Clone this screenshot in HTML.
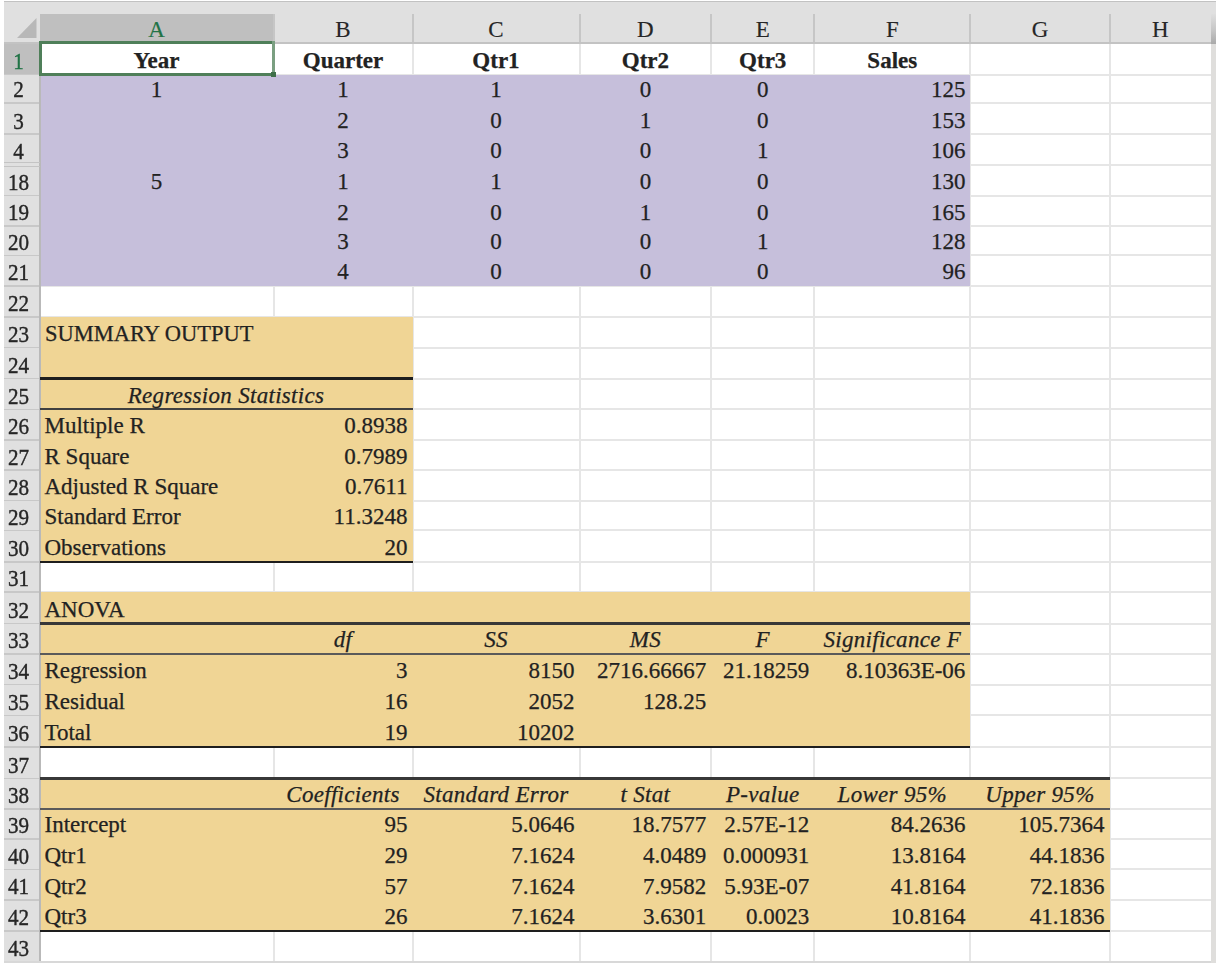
<!DOCTYPE html>
<html><head><meta charset="utf-8"><style>
html,body{margin:0;padding:0;background:#fff;}
body{width:1224px;height:966px;position:relative;overflow:hidden;}
div{position:absolute;}
.t{font-family:"Liberation Serif",serif;font-size:23px;line-height:normal;white-space:nowrap;color:#222;-webkit-text-stroke:0.25px #222;}
.h{font-family:"Liberation Serif",serif;font-size:23px;line-height:normal;white-space:nowrap;text-align:center;-webkit-text-stroke:0.15px currentColor;}
.rh{font-size:24px !important;transform:scaleX(0.88);-webkit-text-stroke:0.4px currentColor;}
#w{position:absolute;left:0;top:0;width:1224px;height:966px;filter:blur(0.6px);}
</style></head><body><div id="w">
<div style="left:4.0px;top:1.0px;width:1212.0px;height:42.5px;background:#e0e0e0"></div>
<div style="left:4.0px;top:0.8px;width:1212.0px;height:1.7px;background:#c2c2c2"></div>
<div style="left:39.5px;top:14.0px;width:234.0px;height:29.5px;background:#bfbfbf"></div>
<div style="left:4.0px;top:43.5px;width:35.5px;height:31.0px;background:#bfbfbf"></div>
<div style="left:4.0px;top:74.5px;width:35.5px;height:887.3px;background:#e0e0e0"></div>
<div style="left:39.5px;top:43.5px;width:1171.8px;height:918.3px;background:#fff"></div>
<div style="left:39.5px;top:73.5px;width:1171.8px;height:2.0px;background:#e6e6e6"></div>
<div style="left:39.5px;top:102.1px;width:1171.8px;height:2.0px;background:#e6e6e6"></div>
<div style="left:39.5px;top:133.2px;width:1171.8px;height:2.0px;background:#e6e6e6"></div>
<div style="left:39.5px;top:163.8px;width:1171.8px;height:2.0px;background:#e6e6e6"></div>
<div style="left:39.5px;top:194.7px;width:1171.8px;height:2.0px;background:#e6e6e6"></div>
<div style="left:39.5px;top:225.1px;width:1171.8px;height:2.0px;background:#e6e6e6"></div>
<div style="left:39.5px;top:254.3px;width:1171.8px;height:2.0px;background:#e6e6e6"></div>
<div style="left:39.5px;top:285.0px;width:1171.8px;height:2.0px;background:#e6e6e6"></div>
<div style="left:39.5px;top:315.8px;width:1171.8px;height:2.0px;background:#e6e6e6"></div>
<div style="left:39.5px;top:346.6px;width:1171.8px;height:2.0px;background:#e6e6e6"></div>
<div style="left:39.5px;top:377.5px;width:1171.8px;height:2.0px;background:#e6e6e6"></div>
<div style="left:39.5px;top:408.3px;width:1171.8px;height:2.0px;background:#e6e6e6"></div>
<div style="left:39.5px;top:438.8px;width:1171.8px;height:2.0px;background:#e6e6e6"></div>
<div style="left:39.5px;top:469.2px;width:1171.8px;height:2.0px;background:#e6e6e6"></div>
<div style="left:39.5px;top:499.6px;width:1171.8px;height:2.0px;background:#e6e6e6"></div>
<div style="left:39.5px;top:529.2px;width:1171.8px;height:2.0px;background:#e6e6e6"></div>
<div style="left:39.5px;top:560.9px;width:1171.8px;height:2.0px;background:#e6e6e6"></div>
<div style="left:39.5px;top:590.9px;width:1171.8px;height:2.0px;background:#e6e6e6"></div>
<div style="left:39.5px;top:622.6px;width:1171.8px;height:2.0px;background:#e6e6e6"></div>
<div style="left:39.5px;top:653.0px;width:1171.8px;height:2.0px;background:#e6e6e6"></div>
<div style="left:39.5px;top:683.5px;width:1171.8px;height:2.0px;background:#e6e6e6"></div>
<div style="left:39.5px;top:714.3px;width:1171.8px;height:2.0px;background:#e6e6e6"></div>
<div style="left:39.5px;top:746.0px;width:1171.8px;height:2.0px;background:#e6e6e6"></div>
<div style="left:39.5px;top:777.3px;width:1171.8px;height:2.0px;background:#e6e6e6"></div>
<div style="left:39.5px;top:807.7px;width:1171.8px;height:2.0px;background:#e6e6e6"></div>
<div style="left:39.5px;top:837.8px;width:1171.8px;height:2.0px;background:#e6e6e6"></div>
<div style="left:39.5px;top:868.2px;width:1171.8px;height:2.0px;background:#e6e6e6"></div>
<div style="left:39.5px;top:899.1px;width:1171.8px;height:2.0px;background:#e6e6e6"></div>
<div style="left:39.5px;top:930.0px;width:1171.8px;height:2.0px;background:#e6e6e6"></div>
<div style="left:39.5px;top:960.8px;width:1171.8px;height:2.0px;background:#e6e6e6"></div>
<div style="left:272.5px;top:43.5px;width:2.0px;height:918.3px;background:#e6e6e6"></div>
<div style="left:411.5px;top:43.5px;width:2.0px;height:918.3px;background:#e6e6e6"></div>
<div style="left:578.5px;top:43.5px;width:2.0px;height:918.3px;background:#e6e6e6"></div>
<div style="left:710.3px;top:43.5px;width:2.0px;height:918.3px;background:#e6e6e6"></div>
<div style="left:813.2px;top:43.5px;width:2.0px;height:918.3px;background:#e6e6e6"></div>
<div style="left:969.4px;top:43.5px;width:2.0px;height:918.3px;background:#e6e6e6"></div>
<div style="left:1108.5px;top:43.5px;width:2.0px;height:918.3px;background:#e6e6e6"></div>
<div style="left:39.5px;top:74.5px;width:930.9px;height:211.5px;background:#c6bfdb"></div>
<div style="left:39.5px;top:316.8px;width:373.0px;height:245.1px;background:#f0d595"></div>
<div style="left:39.5px;top:591.9px;width:930.9px;height:155.1px;background:#f0d595"></div>
<div style="left:39.5px;top:778.3px;width:1070.0px;height:152.7px;background:#f0d595"></div>
<div style="left:272.5px;top:14.0px;width:2.0px;height:29.5px;background:#c6c6c6"></div>
<div style="left:411.5px;top:14.0px;width:2.0px;height:29.5px;background:#c6c6c6"></div>
<div style="left:578.5px;top:14.0px;width:2.0px;height:29.5px;background:#c6c6c6"></div>
<div style="left:710.3px;top:14.0px;width:2.0px;height:29.5px;background:#c6c6c6"></div>
<div style="left:813.2px;top:14.0px;width:2.0px;height:29.5px;background:#c6c6c6"></div>
<div style="left:969.4px;top:14.0px;width:2.0px;height:29.5px;background:#c6c6c6"></div>
<div style="left:1108.5px;top:14.0px;width:2.0px;height:29.5px;background:#c6c6c6"></div>
<div style="left:4.0px;top:42.3px;width:1212.0px;height:1.8px;background:#c3c3c3"></div>
<div style="left:4.0px;top:73.8px;width:35.5px;height:1.5px;background:#c8c8c8"></div>
<div style="left:4.0px;top:102.3px;width:35.5px;height:1.5px;background:#c8c8c8"></div>
<div style="left:4.0px;top:133.4px;width:35.5px;height:1.5px;background:#c8c8c8"></div>
<div style="left:4.0px;top:194.9px;width:35.5px;height:1.5px;background:#c8c8c8"></div>
<div style="left:4.0px;top:225.3px;width:35.5px;height:1.5px;background:#c8c8c8"></div>
<div style="left:4.0px;top:254.6px;width:35.5px;height:1.5px;background:#c8c8c8"></div>
<div style="left:4.0px;top:285.2px;width:35.5px;height:1.5px;background:#c8c8c8"></div>
<div style="left:4.0px;top:316.1px;width:35.5px;height:1.5px;background:#c8c8c8"></div>
<div style="left:4.0px;top:346.9px;width:35.5px;height:1.5px;background:#c8c8c8"></div>
<div style="left:4.0px;top:377.8px;width:35.5px;height:1.5px;background:#c8c8c8"></div>
<div style="left:4.0px;top:408.6px;width:35.5px;height:1.5px;background:#c8c8c8"></div>
<div style="left:4.0px;top:439.1px;width:35.5px;height:1.5px;background:#c8c8c8"></div>
<div style="left:4.0px;top:469.4px;width:35.5px;height:1.5px;background:#c8c8c8"></div>
<div style="left:4.0px;top:499.9px;width:35.5px;height:1.5px;background:#c8c8c8"></div>
<div style="left:4.0px;top:529.5px;width:35.5px;height:1.5px;background:#c8c8c8"></div>
<div style="left:4.0px;top:561.1px;width:35.5px;height:1.5px;background:#c8c8c8"></div>
<div style="left:4.0px;top:591.1px;width:35.5px;height:1.5px;background:#c8c8c8"></div>
<div style="left:4.0px;top:622.9px;width:35.5px;height:1.5px;background:#c8c8c8"></div>
<div style="left:4.0px;top:653.2px;width:35.5px;height:1.5px;background:#c8c8c8"></div>
<div style="left:4.0px;top:683.8px;width:35.5px;height:1.5px;background:#c8c8c8"></div>
<div style="left:4.0px;top:714.5px;width:35.5px;height:1.5px;background:#c8c8c8"></div>
<div style="left:4.0px;top:746.2px;width:35.5px;height:1.5px;background:#c8c8c8"></div>
<div style="left:4.0px;top:777.5px;width:35.5px;height:1.5px;background:#c8c8c8"></div>
<div style="left:4.0px;top:808.0px;width:35.5px;height:1.5px;background:#c8c8c8"></div>
<div style="left:4.0px;top:838.0px;width:35.5px;height:1.5px;background:#c8c8c8"></div>
<div style="left:4.0px;top:868.5px;width:35.5px;height:1.5px;background:#c8c8c8"></div>
<div style="left:4.0px;top:899.4px;width:35.5px;height:1.5px;background:#c8c8c8"></div>
<div style="left:4.0px;top:930.2px;width:35.5px;height:1.5px;background:#c8c8c8"></div>
<div style="left:4.0px;top:961.0px;width:35.5px;height:1.5px;background:#c8c8c8"></div>
<div style="left:39.0px;top:43.5px;width:2.0px;height:918.3px;background:#b9b9b9"></div>
<div style="left:4.0px;top:961.0px;width:1212.0px;height:1.8px;background:#d8d8d8"></div>
<div style="left:1211.3px;top:44.0px;width:4.7px;height:918.8px;background:#dfdedc"></div>
<div style="left:1211.3px;top:14.0px;width:4.7px;height:30.0px;background:linear-gradient(to bottom,#dedede,#c8c8c8 50%,#a9a9a9)"></div>
<div style="left:39.5px;top:377.2px;width:373.0px;height:2.6px;background:#1e1e1e"></div>
<div style="left:39.5px;top:408.3px;width:373.0px;height:2.0px;background:#404040"></div>
<div style="left:39.5px;top:560.6px;width:373.0px;height:2.6px;background:#1e1e1e"></div>
<div style="left:39.5px;top:622.3px;width:930.9px;height:2.6px;background:#383838"></div>
<div style="left:39.5px;top:652.9px;width:930.9px;height:2.2px;background:#5a5a5a"></div>
<div style="left:39.5px;top:745.7px;width:930.9px;height:2.6px;background:#1e1e1e"></div>
<div style="left:39.5px;top:776.9px;width:1070.0px;height:2.8px;background:#383838"></div>
<div style="left:39.5px;top:807.6px;width:1070.0px;height:2.2px;background:#5a5a5a"></div>
<div style="left:39.5px;top:929.7px;width:1070.0px;height:2.6px;background:#1e1e1e"></div>
<div class="t" style="left:39.5px;top:47.9px;width:234.0px;text-align:center;font-weight:bold;">Year</div>
<div class="t" style="left:273.5px;top:47.9px;width:139.0px;text-align:center;font-weight:bold;">Quarter</div>
<div class="t" style="left:412.5px;top:47.9px;width:167.0px;text-align:center;font-weight:bold;">Qtr1</div>
<div class="t" style="left:579.5px;top:47.9px;width:131.8px;text-align:center;font-weight:bold;">Qtr2</div>
<div class="t" style="left:711.3px;top:47.9px;width:102.9px;text-align:center;font-weight:bold;">Qtr3</div>
<div class="t" style="left:814.2px;top:47.9px;width:156.2px;text-align:center;font-weight:bold;">Sales</div>
<div class="t" style="left:39.5px;top:76.5px;width:234.0px;text-align:center;">1</div>
<div class="t" style="left:273.5px;top:76.5px;width:139.0px;text-align:center;">1</div>
<div class="t" style="left:412.5px;top:76.5px;width:167.0px;text-align:center;">1</div>
<div class="t" style="left:579.5px;top:76.5px;width:131.8px;text-align:center;">0</div>
<div class="t" style="left:711.3px;top:76.5px;width:102.9px;text-align:center;">0</div>
<div class="t" style="left:814.2px;top:76.5px;width:151.2px;text-align:right;">125</div>
<div class="t" style="left:273.5px;top:107.6px;width:139.0px;text-align:center;">2</div>
<div class="t" style="left:412.5px;top:107.6px;width:167.0px;text-align:center;">0</div>
<div class="t" style="left:579.5px;top:107.6px;width:131.8px;text-align:center;">1</div>
<div class="t" style="left:711.3px;top:107.6px;width:102.9px;text-align:center;">0</div>
<div class="t" style="left:814.2px;top:107.6px;width:151.2px;text-align:right;">153</div>
<div class="t" style="left:273.5px;top:138.2px;width:139.0px;text-align:center;">3</div>
<div class="t" style="left:412.5px;top:138.2px;width:167.0px;text-align:center;">0</div>
<div class="t" style="left:579.5px;top:138.2px;width:131.8px;text-align:center;">0</div>
<div class="t" style="left:711.3px;top:138.2px;width:102.9px;text-align:center;">1</div>
<div class="t" style="left:814.2px;top:138.2px;width:151.2px;text-align:right;">106</div>
<div class="t" style="left:39.5px;top:169.1px;width:234.0px;text-align:center;">5</div>
<div class="t" style="left:273.5px;top:169.1px;width:139.0px;text-align:center;">1</div>
<div class="t" style="left:412.5px;top:169.1px;width:167.0px;text-align:center;">1</div>
<div class="t" style="left:579.5px;top:169.1px;width:131.8px;text-align:center;">0</div>
<div class="t" style="left:711.3px;top:169.1px;width:102.9px;text-align:center;">0</div>
<div class="t" style="left:814.2px;top:169.1px;width:151.2px;text-align:right;">130</div>
<div class="t" style="left:273.5px;top:199.5px;width:139.0px;text-align:center;">2</div>
<div class="t" style="left:412.5px;top:199.5px;width:167.0px;text-align:center;">0</div>
<div class="t" style="left:579.5px;top:199.5px;width:131.8px;text-align:center;">1</div>
<div class="t" style="left:711.3px;top:199.5px;width:102.9px;text-align:center;">0</div>
<div class="t" style="left:814.2px;top:199.5px;width:151.2px;text-align:right;">165</div>
<div class="t" style="left:273.5px;top:228.7px;width:139.0px;text-align:center;">3</div>
<div class="t" style="left:412.5px;top:228.7px;width:167.0px;text-align:center;">0</div>
<div class="t" style="left:579.5px;top:228.7px;width:131.8px;text-align:center;">0</div>
<div class="t" style="left:711.3px;top:228.7px;width:102.9px;text-align:center;">1</div>
<div class="t" style="left:814.2px;top:228.7px;width:151.2px;text-align:right;">128</div>
<div class="t" style="left:273.5px;top:259.4px;width:139.0px;text-align:center;">4</div>
<div class="t" style="left:412.5px;top:259.4px;width:167.0px;text-align:center;">0</div>
<div class="t" style="left:579.5px;top:259.4px;width:131.8px;text-align:center;">0</div>
<div class="t" style="left:711.3px;top:259.4px;width:102.9px;text-align:center;">0</div>
<div class="t" style="left:814.2px;top:259.4px;width:151.2px;text-align:right;">96</div>
<div class="t" style="left:44.5px;top:321.0px;transform:scaleX(0.978);transform-origin:0 0;">SUMMARY OUTPUT</div>
<div class="t" style="left:39.5px;top:382.7px;width:373.0px;text-align:center;font-style:italic;letter-spacing:0.3px;">Regression Statistics</div>
<div class="t" style="left:44.5px;top:413.2px;">Multiple R</div>
<div class="t" style="left:273.5px;top:413.2px;width:134.0px;text-align:right;">0.8938</div>
<div class="t" style="left:44.5px;top:443.6px;">R Square</div>
<div class="t" style="left:273.5px;top:443.6px;width:134.0px;text-align:right;">0.7989</div>
<div class="t" style="left:44.5px;top:474.0px;">Adjusted R Square</div>
<div class="t" style="left:273.5px;top:474.0px;width:134.0px;text-align:right;">0.7611</div>
<div class="t" style="left:44.5px;top:503.6px;">Standard Error</div>
<div class="t" style="left:273.5px;top:503.6px;width:134.0px;text-align:right;">11.3248</div>
<div class="t" style="left:44.5px;top:535.3px;">Observations</div>
<div class="t" style="left:273.5px;top:535.3px;width:134.0px;text-align:right;">20</div>
<div class="t" style="left:44.5px;top:597.0px;">ANOVA</div>
<div class="t" style="left:273.5px;top:627.4px;width:139.0px;text-align:center;font-style:italic;letter-spacing:0.3px;">df</div>
<div class="t" style="left:412.5px;top:627.4px;width:167.0px;text-align:center;font-style:italic;letter-spacing:0.3px;">SS</div>
<div class="t" style="left:579.5px;top:627.4px;width:131.8px;text-align:center;font-style:italic;letter-spacing:0.3px;">MS</div>
<div class="t" style="left:711.3px;top:627.4px;width:102.9px;text-align:center;font-style:italic;letter-spacing:0.3px;">F</div>
<div class="t" style="left:814.2px;top:627.4px;width:156.2px;text-align:center;font-style:italic;letter-spacing:0.3px;">Significance F</div>
<div class="t" style="left:44.5px;top:657.9px;">Regression</div>
<div class="t" style="left:273.5px;top:657.9px;width:134.0px;text-align:right;">3</div>
<div class="t" style="left:412.5px;top:657.9px;width:162.0px;text-align:right;">8150</div>
<div class="t" style="left:579.5px;top:657.9px;width:126.8px;text-align:right;">2716.66667</div>
<div class="t" style="left:711.3px;top:657.9px;width:97.9px;text-align:right;">21.18259</div>
<div class="t" style="left:814.2px;top:657.9px;width:151.2px;text-align:right;">8.10363E-06</div>
<div class="t" style="left:44.5px;top:688.7px;">Residual</div>
<div class="t" style="left:273.5px;top:688.7px;width:134.0px;text-align:right;">16</div>
<div class="t" style="left:412.5px;top:688.7px;width:162.0px;text-align:right;">2052</div>
<div class="t" style="left:579.5px;top:688.7px;width:126.8px;text-align:right;">128.25</div>
<div class="t" style="left:44.5px;top:720.4px;">Total</div>
<div class="t" style="left:273.5px;top:720.4px;width:134.0px;text-align:right;">19</div>
<div class="t" style="left:412.5px;top:720.4px;width:162.0px;text-align:right;">10202</div>
<div class="t" style="left:273.5px;top:782.1px;width:139.0px;text-align:center;font-style:italic;letter-spacing:0.3px;">Coefficients</div>
<div class="t" style="left:412.5px;top:782.1px;width:167.0px;text-align:center;font-style:italic;letter-spacing:0.3px;">Standard Error</div>
<div class="t" style="left:579.5px;top:782.1px;width:131.8px;text-align:center;font-style:italic;letter-spacing:0.3px;">t Stat</div>
<div class="t" style="left:711.3px;top:782.1px;width:102.9px;text-align:center;font-style:italic;letter-spacing:0.3px;">P-value</div>
<div class="t" style="left:814.2px;top:782.1px;width:156.2px;text-align:center;font-style:italic;letter-spacing:0.3px;">Lower 95%</div>
<div class="t" style="left:970.4px;top:782.1px;width:139.1px;text-align:center;font-style:italic;letter-spacing:0.3px;">Upper 95%</div>
<div class="t" style="left:44.5px;top:812.2px;">Intercept</div>
<div class="t" style="left:273.5px;top:812.2px;width:134.0px;text-align:right;">95</div>
<div class="t" style="left:412.5px;top:812.2px;width:162.0px;text-align:right;">5.0646</div>
<div class="t" style="left:579.5px;top:812.2px;width:126.8px;text-align:right;">18.7577</div>
<div class="t" style="left:711.3px;top:812.2px;width:97.9px;text-align:right;">2.57E-12</div>
<div class="t" style="left:814.2px;top:812.2px;width:151.2px;text-align:right;">84.2636</div>
<div class="t" style="left:970.4px;top:812.2px;width:134.1px;text-align:right;">105.7364</div>
<div class="t" style="left:44.5px;top:842.6px;">Qtr1</div>
<div class="t" style="left:273.5px;top:842.6px;width:134.0px;text-align:right;">29</div>
<div class="t" style="left:412.5px;top:842.6px;width:162.0px;text-align:right;">7.1624</div>
<div class="t" style="left:579.5px;top:842.6px;width:126.8px;text-align:right;">4.0489</div>
<div class="t" style="left:711.3px;top:842.6px;width:97.9px;text-align:right;">0.000931</div>
<div class="t" style="left:814.2px;top:842.6px;width:151.2px;text-align:right;">13.8164</div>
<div class="t" style="left:970.4px;top:842.6px;width:134.1px;text-align:right;">44.1836</div>
<div class="t" style="left:44.5px;top:873.5px;">Qtr2</div>
<div class="t" style="left:273.5px;top:873.5px;width:134.0px;text-align:right;">57</div>
<div class="t" style="left:412.5px;top:873.5px;width:162.0px;text-align:right;">7.1624</div>
<div class="t" style="left:579.5px;top:873.5px;width:126.8px;text-align:right;">7.9582</div>
<div class="t" style="left:711.3px;top:873.5px;width:97.9px;text-align:right;">5.93E-07</div>
<div class="t" style="left:814.2px;top:873.5px;width:151.2px;text-align:right;">41.8164</div>
<div class="t" style="left:970.4px;top:873.5px;width:134.1px;text-align:right;">72.1836</div>
<div class="t" style="left:44.5px;top:904.4px;">Qtr3</div>
<div class="t" style="left:273.5px;top:904.4px;width:134.0px;text-align:right;">26</div>
<div class="t" style="left:412.5px;top:904.4px;width:162.0px;text-align:right;">7.1624</div>
<div class="t" style="left:579.5px;top:904.4px;width:126.8px;text-align:right;">3.6301</div>
<div class="t" style="left:711.3px;top:904.4px;width:97.9px;text-align:right;">0.0023</div>
<div class="t" style="left:814.2px;top:904.4px;width:151.2px;text-align:right;">10.8164</div>
<div class="t" style="left:970.4px;top:904.4px;width:134.1px;text-align:right;">41.1836</div>
<div class="h" style="left:39.5px;top:16.5px;width:234.0px;color:#217346">A</div>
<div class="h" style="left:273.5px;top:16.5px;width:139.0px;color:#262626">B</div>
<div class="h" style="left:412.5px;top:16.5px;width:167.0px;color:#262626">C</div>
<div class="h" style="left:579.5px;top:16.5px;width:131.8px;color:#262626">D</div>
<div class="h" style="left:711.3px;top:16.5px;width:102.9px;color:#262626">E</div>
<div class="h" style="left:814.2px;top:16.5px;width:156.2px;color:#262626">F</div>
<div class="h" style="left:970.4px;top:16.5px;width:139.1px;color:#262626">G</div>
<div class="h" style="left:1109.5px;top:16.5px;width:101.8px;color:#262626">H</div>
<div class="h rh" style="left:4px;top:47.8px;width:29px;color:#217346">1</div>
<div class="h rh" style="left:4px;top:76.4px;width:29px;color:#262626">2</div>
<div class="h rh" style="left:4px;top:107.5px;width:29px;color:#262626">3</div>
<div class="h rh" style="left:4px;top:138.1px;width:29px;color:#262626">4</div>
<div class="h rh" style="left:4px;top:169.0px;width:29px;color:#262626">18</div>
<div class="h rh" style="left:4px;top:199.4px;width:29px;color:#262626">19</div>
<div class="h rh" style="left:4px;top:228.6px;width:29px;color:#262626">20</div>
<div class="h rh" style="left:4px;top:259.3px;width:29px;color:#262626">21</div>
<div class="h rh" style="left:4px;top:290.1px;width:29px;color:#262626">22</div>
<div class="h rh" style="left:4px;top:320.9px;width:29px;color:#262626">23</div>
<div class="h rh" style="left:4px;top:351.8px;width:29px;color:#262626">24</div>
<div class="h rh" style="left:4px;top:382.6px;width:29px;color:#262626">25</div>
<div class="h rh" style="left:4px;top:413.1px;width:29px;color:#262626">26</div>
<div class="h rh" style="left:4px;top:443.5px;width:29px;color:#262626">27</div>
<div class="h rh" style="left:4px;top:473.9px;width:29px;color:#262626">28</div>
<div class="h rh" style="left:4px;top:503.5px;width:29px;color:#262626">29</div>
<div class="h rh" style="left:4px;top:535.2px;width:29px;color:#262626">30</div>
<div class="h rh" style="left:4px;top:565.2px;width:29px;color:#262626">31</div>
<div class="h rh" style="left:4px;top:596.9px;width:29px;color:#262626">32</div>
<div class="h rh" style="left:4px;top:627.3px;width:29px;color:#262626">33</div>
<div class="h rh" style="left:4px;top:657.8px;width:29px;color:#262626">34</div>
<div class="h rh" style="left:4px;top:688.6px;width:29px;color:#262626">35</div>
<div class="h rh" style="left:4px;top:720.3px;width:29px;color:#262626">36</div>
<div class="h rh" style="left:4px;top:751.6px;width:29px;color:#262626">37</div>
<div class="h rh" style="left:4px;top:782.0px;width:29px;color:#262626">38</div>
<div class="h rh" style="left:4px;top:812.1px;width:29px;color:#262626">39</div>
<div class="h rh" style="left:4px;top:842.5px;width:29px;color:#262626">40</div>
<div class="h rh" style="left:4px;top:873.4px;width:29px;color:#262626">41</div>
<div class="h rh" style="left:4px;top:904.3px;width:29px;color:#262626">42</div>
<div class="h rh" style="left:4px;top:935.1px;width:29px;color:#262626">43</div>
<div style="left:4.0px;top:162.0px;width:35.5px;height:1.4px;background:#c4c4c4"></div>
<div style="left:4.0px;top:166.0px;width:35.5px;height:1.4px;background:#c4c4c4"></div>
<svg style="position:absolute;left:0;top:0" width="40" height="44"><polygon points="36.5,18 36.5,38 17,38" fill="#b8b8b8"/></svg>
<div style="left:39.0px;top:41.0px;width:236.0px;height:3.0px;background:#4f7f59"></div>
<div style="left:39.0px;top:73.0px;width:236.0px;height:2.5px;background:#4f7f59"></div>
<div style="left:39.0px;top:41.0px;width:2.5px;height:34.5px;background:#4f7f59"></div>
<div style="left:272.0px;top:41.0px;width:3.0px;height:34.5px;background:#7a9f81"></div>
<div style="left:270.7px;top:71.7px;width:5.5px;height:5.5px;background:#3f7049"></div>
</div></body></html>
